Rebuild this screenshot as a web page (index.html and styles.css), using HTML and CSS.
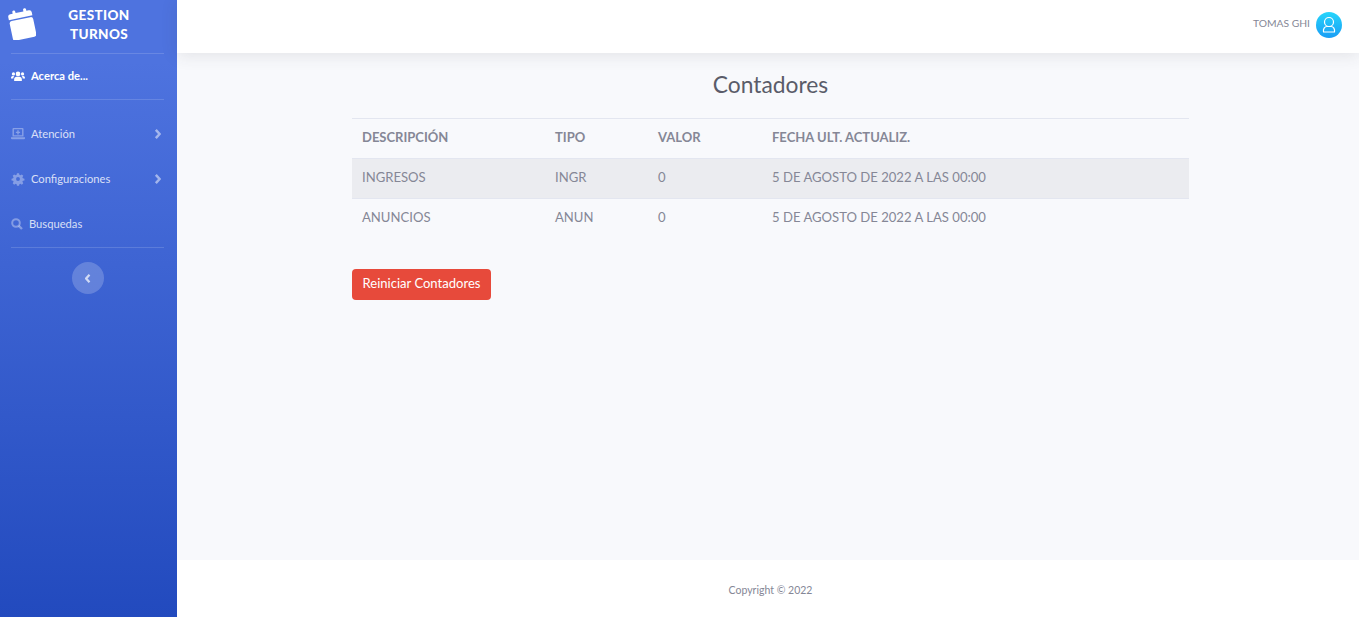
FILE: index.html
```html
<!DOCTYPE html>
<html lang="es">
<head>
  <meta charset="UTF-8" />
  <meta name="viewport" content="width=device-width, initial-scale=1.0" />
  <title>Gestion Turnos</title>
  <link rel="stylesheet" href="styles.css">
</head>
<body>
  <div class="wrapper">
    <aside class="sidebar">
      <div class="brand">
        <svg class="brand-icon" viewBox="0 0 28 32" width="28" height="32">
          <g transform="rotate(-12 14 16)" fill="#fff">
            <rect x="2" y="11" width="24" height="20" rx="2.5"/>
            <path d="M4.5 4h2.5V2.5a1.5 1.5 0 0 1 3 0V4h8V2.5a1.5 1.5 0 0 1 3 0V4h2.5A2.5 2.5 0 0 1 26 6.500V9.500H2V6.500A2.500 2.500 0 0 1 4.500 4z"/>
          </g>
        </svg>
        <div class="brand-text">GESTION<br>TURNOS</div>
      </div>
      <hr class="divider">
      <a class="nav-item nav-active">
        <svg class="nav-icon" viewBox="0 0 20 14" width="14" height="10">
          <circle cx="10" cy="4" r="3.300" fill="currentColor"/>
          <circle cx="3.500" cy="4" r="2.300" fill="currentColor"/>
          <circle cx="16.500" cy="4" r="2.300" fill="currentColor"/>
          <path d="M4.500 14v-2.500C4.500 9.500 6 8 8 8h4c2 0 3.500 1.500 3.500 3.500V14zM0 10c0-2 1-3 2.500-3h2.200C3.800 8 3.300 9 3.300 10.500H0zM20 10c0-2-1-3-2.500-3h-2.200c.9 1 1.400 2 1.400 3.500H20z" fill="currentColor"/>
        </svg>
        <span>Acerca de...</span>
      </a>
      <hr class="divider">
      <a class="nav-item nav-first">
        <svg class="nav-icon" viewBox="0 0 14 12" width="14" height="12">
          <path d="M2.500 0h9A1 1 0 0 1 12.500 1v7.500h-11V1a1 1 0 0 1 1-1zm.4 1.300v5.900h8.200V1.300zM0 9.300h14v.9A1 1 0 0 1 13 11.200H1A1 1 0 0 1 0 10.200z" fill="currentColor" fill-rule="evenodd"/>
          <path d="M6.300 2.300h1.400v1.400h1.400v1.400H7.700v1.400H6.300V5.100H4.900V3.700h1.400z" fill="currentColor"/>
        </svg>
        <span>Atención</span>
        <svg class="chevron" viewBox="0 0 8 12" width="7" height="10"><path d="M2 1l4.500 5L2 11" fill="none" stroke="currentColor" stroke-width="3"/></svg>
      </a>
      <a class="nav-item">
        <svg class="nav-icon" viewBox="0 0 24 24" width="14" height="14">
          <path d="M12 8.300a3.700 3.700 0 1 0 0 7.400 3.700 3.700 0 0 0 0-7.400zM10 1h4l.6 3 2.100.9 2.600-1.700 2.800 2.800-1.700 2.600.9 2.100 3 .6v3.400l-3 .6-.9 2.100 1.700 2.600-2.800 2.800-2.600-1.700-2.100.9-.6 3h-4l-.6-3-2.100-.9-2.600 1.700-2.800-2.800 1.700-2.600-.9-2.100-3-.6v-3.400l3-.6.9-2.100-1.700-2.600 2.800-2.800 2.600 1.700 2.100-.9z" fill="currentColor" fill-rule="evenodd" transform="translate(1.200 1.200) scale(.9)"/>
        </svg>
        <span>Configuraciones</span>
        <svg class="chevron" viewBox="0 0 8 12" width="7" height="10"><path d="M2 1l4.500 5L2 11" fill="none" stroke="currentColor" stroke-width="3"/></svg>
      </a>
      <a class="nav-item nav-search">
        <svg class="nav-icon" viewBox="0 0 12 12" width="12" height="12">
          <circle cx="5" cy="5" r="3.800" fill="none" stroke="currentColor" stroke-width="2"/>
          <path d="M7.800 7.800L11 11" stroke="currentColor" stroke-width="2.400"/>
        </svg>
        <span>Busquedas</span>
      </a>
      <hr class="divider divider-end">
      <button class="toggle" type="button">
        <svg viewBox="0 0 8 12" width="6" height="9"><path d="M6 1L1.500 6 6 11" fill="none" stroke="currentColor" stroke-width="3"/></svg>
      </button>
    </aside>
    <div class="content">
      <header class="topbar">
        <span class="user-name">TOMAS GHI</span>
        <span class="avatar">
          <svg viewBox="0 0 26 26" width="26" height="26" fill="none" stroke="#fff" stroke-width="1.200">
            <circle cx="13" cy="10" r="4.500"/>
            <path d="M7.500 20c-.5-3 1-5.500 3.500-5.500h4c2.500 0 4 2.500 3.500 5.500z" stroke-linejoin="round"/>
          </svg>
        </span>
      </header>
      <main class="main">
        <div class="container">
          <h1 class="title">Contadores</h1>
          <table class="table">
            <thead>
              <tr><th class="col-desc">DESCRIPCIÓN</th><th class="col-tipo">TIPO</th><th class="col-valor">VALOR</th><th>FECHA ULT. ACTUALIZ.</th></tr>
            </thead>
            <tbody>
              <tr class="row-hover"><td>INGRESOS</td><td>INGR</td><td>0</td><td>5 DE AGOSTO DE 2022 A LAS 00:00</td></tr>
              <tr><td>ANUNCIOS</td><td>ANUN</td><td>0</td><td>5 DE AGOSTO DE 2022 A LAS 00:00</td></tr>
            </tbody>
          </table>
          <button class="btn-danger" type="button">Reiniciar Contadores</button>
        </div>
      </main>
      <footer class="footer">Copyright © 2022</footer>
    </div>
  </div>
</body>
</html>
```

FILE: styles.css
```css
* {
  box-sizing: border-box;
}
body {
  margin: 0;
  font-family: 'Lato', 'Noto Sans', sans-serif;
  background: #f8f9fc;
  color: #858796;
}
.wrapper {
  display: flex;
  height: 617px;
  overflow: hidden;
}
.sidebar {
  width: 177px;
  flex-shrink: 0;
  padding: 0 13px 0 11px;
  background: linear-gradient(180deg, #4e73df 10%, #224abe 100%);
  color: rgba(255, 255, 255, 0.8);
}
.brand {
  display: flex;
  height: 53px;
  color: #fff;
}
.brand-icon {
  margin: 8px 0 0 -3px;
}
.brand-text {
  width: 100px;
  margin: 6px 0 0 13px;
  font-size: 13.500px;
  font-weight: 900;
  line-height: 19px;
  letter-spacing: 0.4px;
  text-align: center;
}
.divider {
  margin: 0;
  border: 0;
  border-top: 1px solid rgba(255, 255, 255, 0.15);
}
.nav-item {
  display: flex;
  align-items: center;
  height: 45px;
  padding-bottom: 2px;
  font-size: 11.200px;
}
.nav-active {
  color: #fff;
  font-weight: 700;
}
.nav-first {
  margin-top: 12px;
}
.nav-icon {
  flex-shrink: 0;
  margin-right: 6px;
  color: rgba(255, 255, 255, 0.35);
}
.nav-active .nav-icon {
  color: #fff;
}
.chevron {
  margin-left: auto;
  margin-right: 3px;
  color: rgba(255, 255, 255, 0.5);
}
.toggle {
  display: flex;
  align-items: center;
  justify-content: center;
  width: 32px;
  height: 32px;
  margin: 14px auto 0;
  padding: 0;
  border: 0;
  border-radius: 50%;
  background: rgba(255, 255, 255, 0.2);
  color: rgba(255, 255, 255, 0.7);
}
.content {
  display: flex;
  flex: 1;
  flex-direction: column;
  min-width: 0;
}
.topbar {
  position: relative;
  display: flex;
  align-items: center;
  justify-content: flex-end;
  height: 53px;
  padding: 0 17px 4px 0;
  background: #fff;
  box-shadow: 0 2px 16px rgba(58, 59, 69, 0.12);
}
.user-name {
  margin: 0 6px 3px 0;
  font-size: 10.300px;
  color: #858796;
}
.avatar {
  width: 26px;
  height: 26px;
  border-radius: 50%;
  background: linear-gradient(180deg, #25d5fb, #1a9df5);
}
.main {
  flex: 1;
}
.container {
  width: 837px;
  margin-left: 175px;
}
.title {
  margin: 16px 0 19px;
  font-size: 22.800px;
  font-weight: 400;
  line-height: 30px;
  text-align: center;
  color: #5a5c69;
}
.table {
  width: 100%;
  border-collapse: collapse;
  font-size: 13.100px;
}
.table th,
.table td {
  height: 40px;
  padding: 0 10px 4px;
  border-top: 1px solid #e3e6f0;
  text-align: left;
}
.table th {
  font-size: 13px;
  font-weight: 700;
}
.col-desc {
  width: 193px;
}
.col-tipo {
  width: 103px;
}
.col-valor {
  width: 114px;
}
.row-hover {
  background: #ebecf0;
}
.btn-danger {
  display: block;
  width: 139px;
  height: 31px;
  margin-top: 30px;
  padding: 0 0 2px;
  border: 0;
  border-radius: 4px;
  background: #e74a3b;
  color: #fff;
  font-family: inherit;
  font-size: 13.050px;
}
.footer {
  height: 57px;
  padding: 24px 0 0 5px;
  background: #fff;
  font-size: 10.500px;
  text-align: center;
}
```
